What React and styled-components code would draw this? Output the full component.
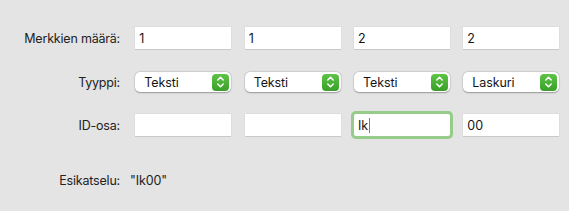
import React from "react";
import styled, { createGlobalStyle } from "styled-components";

const Global = createGlobalStyle`
  html, body { margin: 0; padding: 0; background: #e4e4e4; }
  body { font-family: Inter, "Noto Sans", "Liberation Sans", sans-serif; }
`;

const Page = styled.div`
  width: 569px;
  height: 211px;
  background: #e4e4e4;
  padding-top: 27px;
  box-sizing: border-box;
  display: flex;
  flex-direction: column;
`;

const Row = styled.div`
  display: grid;
  grid-template-columns: 122px repeat(4, 96px);
  column-gap: 13.33px;
  align-items: center;
  height: ${(p) => p.$h}px;
  margin-top: ${(p) => p.$mt || 0}px;
`;

const Label = styled.div`
  text-align: right;
  padding-right: 2px;
  font-size: 12.5px;
  letter-spacing: -0.2px;
  color: #222;
`;

const Field = styled.div`
  position: relative;
  height: 22px;
  background: #fff;
  box-shadow: 0 1px 0 #c9c9c9, 0 0 0 0.5px #d6d6d6;
  font-size: 12.5px;
  color: #151515;
  display: flex;
  align-items: center;
  padding-left: 4px;
  box-sizing: border-box;
  ${(p) =>
    p.$focus &&
    `
    box-shadow: 0 0 0 3px #96cc8a;
    border-radius: 2px;
  `}
`;

const Caret = styled.span`
  display: inline-block;
  width: 1.5px;
  height: 15px;
  background: #3fae2f;
  margin-left: 0.5px;
`;

const Popup = styled.div`
  height: 20px;
  background: #fff;
  border-radius: 5px;
  box-shadow: 0 0.5px 1.5px rgba(0, 0, 0, 0.3), 0 0 0 0.5px rgba(0, 0, 0, 0.08);
  display: flex;
  align-items: center;
  justify-content: space-between;
  padding: 0 2px 0 9px;
  font-size: 12.5px;
  letter-spacing: -0.1px;
  color: #151515;
  box-sizing: border-box;
`;

const Stepper = styled.div`
  width: 17px;
  height: 17px;
  border-radius: 4px;
  background: linear-gradient(#5ec446, #3a9f29);
  display: flex;
  align-items: center;
  justify-content: center;
`;

const PreviewRow = styled.div`
  display: flex;
  align-items: center;
  margin-top: 36px;
  height: 16px;
`;

const PreviewLabel = styled(Label)`
  width: 122px;
  box-sizing: border-box;
`;

const PreviewValue = styled.div`
  margin-left: 8px;
  font-size: 12.5px;
  letter-spacing: -0.1px;
  color: #222;
`;

function Chevrons() {
  return (
    <svg width="9" height="14" viewBox="0 0 9 14">
      <path d="M1.8 5 L4.5 2.2 L7.2 5 M1.8 9 L4.5 11.8 L7.2 9" fill="none" stroke="#fff" strokeWidth="1.5" strokeLinecap="round" strokeLinejoin="round" />
    </svg>
  );
}

function Select({ value }) {
  return (
    <Popup>
      <span>{value}</span>
      <Stepper>
        <Chevrons />
      </Stepper>
    </Popup>
  );
}

export default function App() {
  return (
    <>
      <Global />
      <Page>
        <Row $h={22}>
          <Label>Merkkien määrä:</Label>
          <Field>1</Field>
          <Field>1</Field>
          <Field>2</Field>
          <Field>2</Field>
        </Row>
        <Row $h={20} $mt={23}>
          <Label>Tyyppi:</Label>
          <Select value="Teksti" />
          <Select value="Teksti" />
          <Select value="Teksti" />
          <Select value="Laskuri" />
        </Row>
        <Row $h={22} $mt={22}>
          <Label>ID-osa:</Label>
          <Field />
          <Field />
          <Field $focus>
            Ik<Caret />
          </Field>
          <Field>00</Field>
        </Row>
        <PreviewRow>
          <PreviewLabel>Esikatselu:</PreviewLabel>
          <PreviewValue>"Ik00"</PreviewValue>
        </PreviewRow>
      </Page>
    </>
  );
}
